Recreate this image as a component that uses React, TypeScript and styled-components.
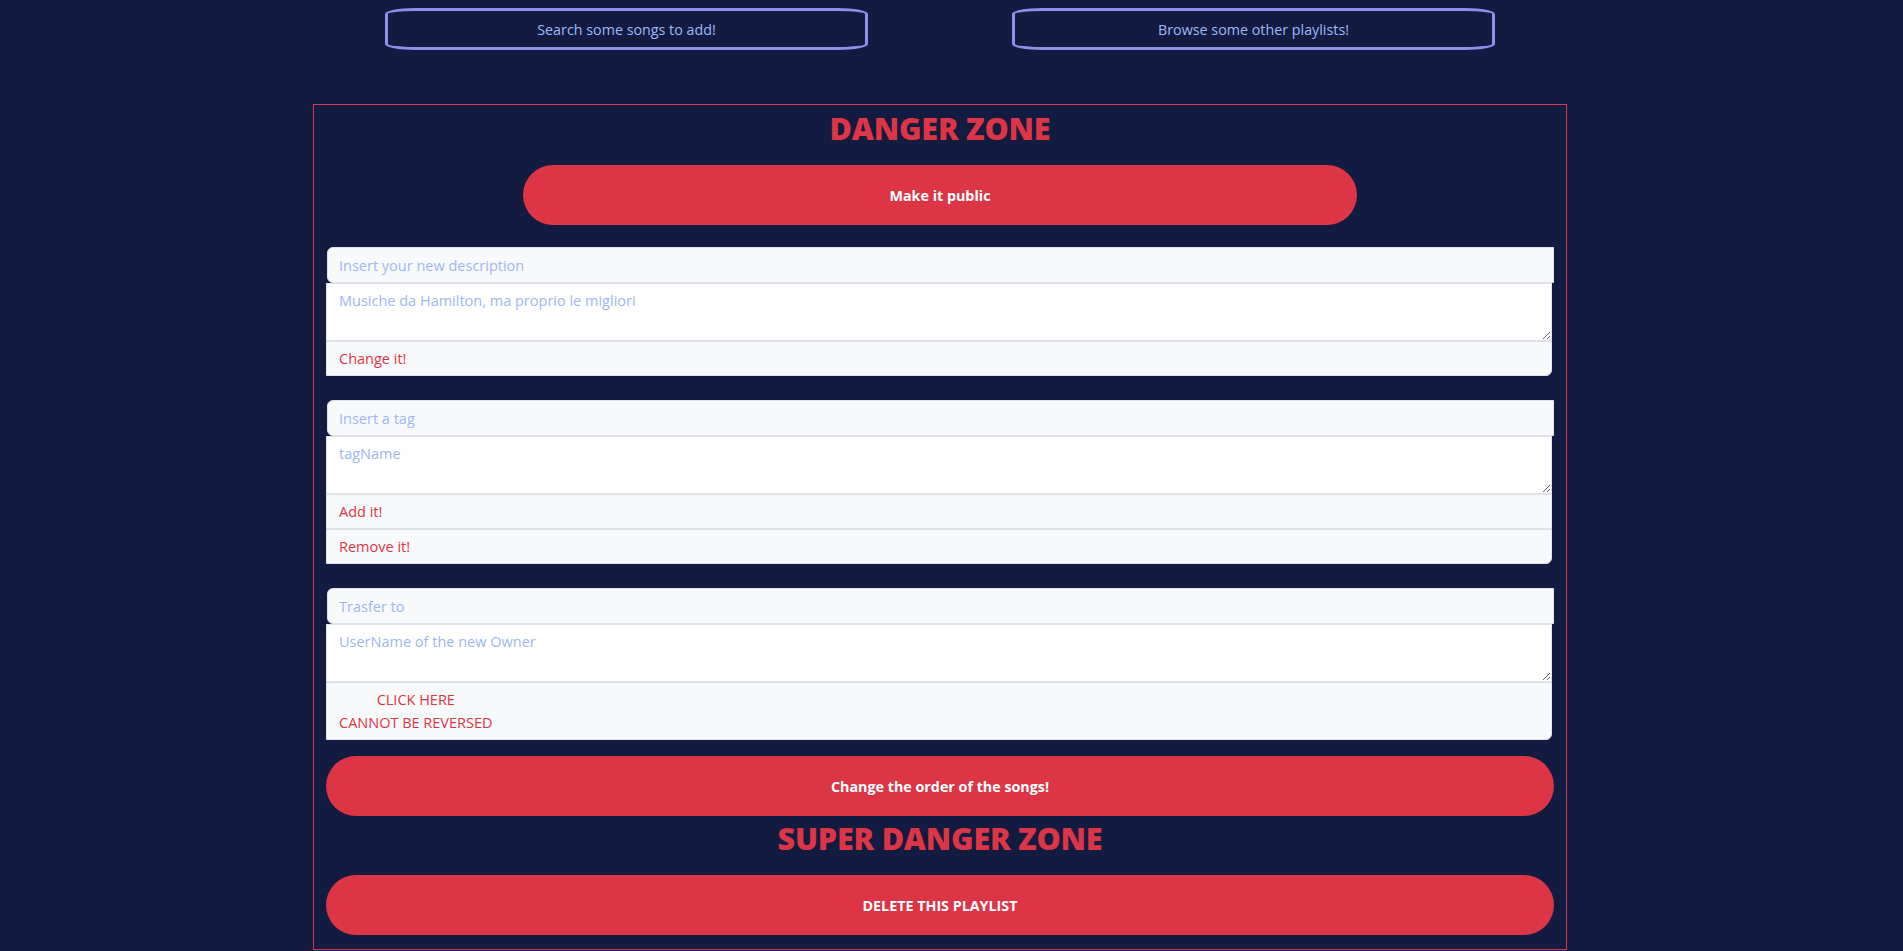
import React from "react";
import styled, { createGlobalStyle } from "styled-components";

const GlobalStyle = createGlobalStyle`
  html, body {
    margin: 0;
    padding: 0;
    background-color: #131b41;
  }
  body {
    font-family: "Open Sans", "Liberation Sans", sans-serif;
    min-height: 951px;
  }
  * {
    box-sizing: border-box;
  }
`;

const Page = styled.div`
  width: 1254px;
  margin-left: 313px;
  padding-top: 8px;
`;

const TopRow = styled.div`
  display: grid;
  grid-template-columns: 1fr 1fr;
`;

const NavButton = styled.button`
  justify-self: center;
  width: 483px;
  height: 42px;
  background: transparent;
  border: 3px solid #8c90ec;
  border-radius: 30px / 6px;
  color: #9db9f7;
  font-family: "Open Sans", "Liberation Sans", sans-serif;
  font-size: 14.3px;
  cursor: pointer;
`;

const DangerBox = styled.div`
  margin-top: 54px;
  border: 1px solid #dc3545;
  padding: 0 12px 14px 12px;
  display: flex;
  flex-direction: column;
  align-items: center;
`;

const Title = styled.h2<{ $top: number }>`
  margin: ${(p) => p.$top}px 0 19px 0;
  color: #dc3545;
  font-family: "Open Sans", "Liberation Sans", sans-serif;
  font-weight: 800;
  font-size: 30.5px;
  line-height: 36px;
  letter-spacing: -0.2px;
`;

const PillButton = styled.button<{ $wide?: boolean; $top?: number }>`
  width: ${(p) => (p.$wide ? "100%" : "834px")};
  height: 60px;
  margin-top: ${(p) => p.$top || 0}px;
  border: none;
  border-radius: 30px;
  background-color: #dc3545;
  color: #ffffff;
  font-family: "Open Sans", "Liberation Sans", sans-serif;
  font-weight: 700;
  font-size: 14.3px;
  cursor: pointer;
`;

const Group = styled.div`
  width: 100%;
  margin-top: 22px;
  display: flex;
  flex-direction: column;

  & + & {
    margin-top: 24px;
  }
`;

const GroupLabel = styled.div`
  height: 36px;
  margin-left: 1px;
  padding: 0 11px;
  display: flex;
  align-items: center;
  background-color: #f8f9fa;
  border: 1px solid #dee2e6;
  border-radius: 6px 0 0 6px;
  color: #9fb6f3;
  font-size: 14.5px;
`;

const GroupArea = styled.textarea`
  width: calc(100% - 2px);
  height: 58px;
  margin: 0;
  padding: 6px 12px;
  border: 1px solid #dee2e6;
  border-radius: 0;
  background-color: #ffffff;
  font-family: "Open Sans", "Liberation Sans", sans-serif;
  font-size: 14.5px;
  line-height: 22px;
  resize: vertical;
  outline: none;

  &::placeholder {
    color: #9fb6f3;
  }
`;

const GroupButton = styled.button<{ $last?: boolean }>`
  width: calc(100% - 2px);
  min-height: 35px;
  margin: 0;
  padding: 5px 12px;
  text-align: left;
  background-color: #f8f9fa;
  border: 1px solid #dee2e6;
  border-radius: ${(p) => (p.$last ? "0 0 6px 0" : "0")};
  color: #dc3545;
  font-family: "Open Sans", "Liberation Sans", sans-serif;
  font-size: 14.5px;
  line-height: 22px;
  cursor: pointer;
`;

const Stacked = styled.span`
  display: inline-block;
  text-align: center;
  line-height: 23px;
`;

export default function App() {
  return (
    <>
      <GlobalStyle />
      <Page>
        <TopRow>
          <NavButton>Search some songs to add!</NavButton>
          <NavButton>Browse some other playlists!</NavButton>
        </TopRow>

        <DangerBox>
          <Title $top={5}>DANGER ZONE</Title>
          <PillButton>Make it public</PillButton>

          <Group>
            <GroupLabel>Insert your new description</GroupLabel>
            <GroupArea placeholder="Musiche da Hamilton, ma proprio le migliori" />
            <GroupButton $last>Change it!</GroupButton>
          </Group>

          <Group>
            <GroupLabel>Insert a tag</GroupLabel>
            <GroupArea placeholder="tagName" />
            <GroupButton>Add it!</GroupButton>
            <GroupButton $last>Remove it!</GroupButton>
          </Group>

          <Group>
            <GroupLabel>Trasfer to</GroupLabel>
            <GroupArea placeholder="UserName of the new Owner" />
            <GroupButton $last>
              <Stacked>
                CLICK HERE
                <br />
                CANNOT BE REVERSED
              </Stacked>
            </GroupButton>
          </Group>

          <PillButton $wide $top={16}>
            Change the order of the songs!
          </PillButton>
          <Title $top={4}>SUPER DANGER ZONE</Title>
          <PillButton $wide>DELETE THIS PLAYLIST</PillButton>
        </DangerBox>
      </Page>
    </>
  );
}
